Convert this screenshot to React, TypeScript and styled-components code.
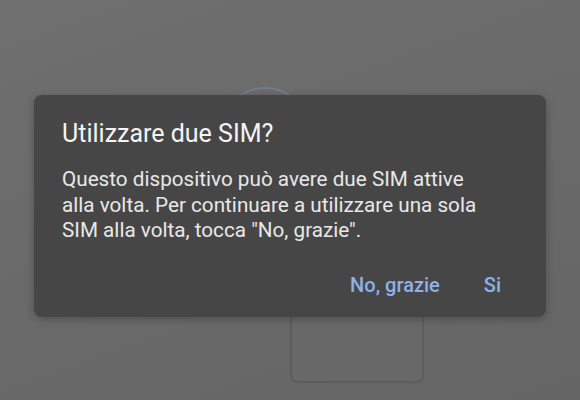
import React from "react";
import styled, { createGlobalStyle } from "styled-components";

const Global = createGlobalStyle`
  html, body { margin: 0; padding: 0; background: #6a6a6a; }
  * { box-sizing: border-box; }
`;

const Screen = styled.div`
  position: relative;
  width: 580px;
  height: 400px;
  overflow: hidden;
  background: linear-gradient(160deg, #6f6f6f 0%, #6a6a6a 50%, #656565 100%);
  font-family: Roboto, "Noto Sans", sans-serif;
`;

const Backdrop = styled.div`
  display: flex;
  flex-direction: column;
  align-items: flex-start;
  padding-top: 87px;
`;

const Ring = styled.div<{ $left: number }>`
  margin-left: ${(p) => p.$left}px;
  width: 90px;
  height: 90px;
  border-radius: 50%;
  border: 2px solid #767a90;
`;

const Card = styled.div<{ $left: number }>`
  margin-left: ${(p) => p.$left}px;
  margin-top: 56px;
  width: 134px;
  height: 150px;
  border-radius: 7px;
  border: 2px solid #5d5d5d;
  background: #686868;
`;

const Dialog = styled.div`
  position: absolute;
  left: 34px;
  top: 95px;
  width: 512px;
  height: 222px;
  border-radius: 8px;
  background: #464646;
  box-shadow: 0 2px 8px rgba(0, 0, 0, 0.25);
  padding: 24px 20px 0 28px;
  display: flex;
  flex-direction: column;
`;

const Title = styled.h2`
  margin: 0;
  font-size: 25px;
  line-height: 30px;
  font-weight: 400;
  color: #f4f4f4;
`;

const Body = styled.p`
  margin: 18px 0 0 0;
  font-size: 20.7px;
  line-height: 25.5px;
  font-weight: 400;
  color: #e8e8e8;
  white-space: nowrap;
`;

const Actions = styled.div`
  display: flex;
  justify-content: flex-end;
  gap: 44px;
  margin-top: 29px;
  padding-right: 25px;
`;

const Action = styled.span`
  font-size: 20px;
  line-height: 24px;
  font-weight: 500;
  color: #8fb0e8;
`;

export default function App() {
  return (
    <>
      <Global />
      <Screen>
        <Backdrop>
          <Ring $left={220} />
          <Card $left={290} />
        </Backdrop>
        <Dialog>
          <Title>Utilizzare due SIM?</Title>
          <Body>
            Questo dispositivo può avere due SIM attive
            <br />
            alla volta. Per continuare a utilizzare una sola
            <br />
            SIM alla volta, tocca "No, grazie".
          </Body>
          <Actions>
            <Action>No, grazie</Action>
            <Action>Si</Action>
          </Actions>
        </Dialog>
      </Screen>
    </>
  );
}
